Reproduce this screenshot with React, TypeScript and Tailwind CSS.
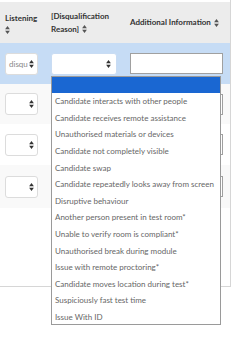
import React from 'react';

const font = { fontFamily: 'Lato, "Noto Sans", sans-serif' };

function SortIcon({ className = '' }: { className?: string }) {
  return (
    <svg viewBox="0 0 6 10" className={`w-[5px] h-[8px] shrink-0 ${className}`} fill="currentColor">
      <path d="M3 0 L6 4 H0 Z M3 10 L0 6 H6 Z" />
    </svg>
  );
}

const reasons = [
  'Candidate interacts with other people',
  'Candidate receives remote assistance',
  'Unauthorised materials or devices',
  'Candidate not completely visible',
  'Candidate swap',
  'Candidate repeatedly looks away from screen',
  'Disruptive behaviour',
  'Another person present in test room*',
  'Unable to verify room is compliant*',
  'Unauthorised break during module',
  'Issue with remote proctoring*',
  'Candidate moves location during test*',
  'Suspiciously fast test time',
  'Issue With ID',
];

function SmallSelect({ value = '' }: { value?: string }) {
  return (
    <div className="w-[33px] h-[22px] bg-white border border-[#dcdcdc] rounded-[3px] flex items-center justify-between pl-[3px] pr-[3px] overflow-hidden">
      <span className="text-[8px] text-[#888] leading-none">{value}</span>
      <SortIcon className="text-[#333]" />
    </div>
  );
}

function Row({ bg, h, first }: { bg: string; h: string; first?: boolean }) {
  return (
    <div className={`grid grid-cols-[46px_79px_105px] items-center ${bg} ${h}`}>
      <div className="pl-[5px]">
        <SmallSelect value={first ? 'disqu' : ''} />
      </div>
      <div className="pl-[5px]">
        {first && (
          <div className="w-[66px] h-[22px] bg-white border border-[#c9dcf3] rounded-[3px] flex items-center justify-end pr-[5px]">
            <SortIcon className="text-[#333]" />
          </div>
        )}
      </div>
      <div className="pl-[5px]">
        <div className="w-[93px] h-[21px] bg-white border border-[#a0a0a0]" />
      </div>
    </div>
  );
}

export default function App() {
  return (
    <div className="w-[244px] h-[338px] bg-white relative overflow-hidden text-[#333]" style={font}>
      <div className="w-[231px] h-[287px] border-r border-b border-[#d6d6d6] pt-[2px]">
        {/* header */}
        <div className="grid grid-cols-[46px_79px_105px] items-center h-[41px] bg-[#ececec] text-[8px] font-bold leading-[13px] text-[#333]">
          <div className="pl-[5px]">
            <div>Listening</div>
            <SortIcon className="text-[#555] mt-[1px]" />
          </div>
          <div className="pl-[5px]">
            <div>[Disqualification</div>
            <div className="flex items-center gap-[3px]">
              Reason]
              <SortIcon className="text-[#555]" />
            </div>
          </div>
          <div className="pl-[5px] flex items-center gap-[3px]">
            Additional Information
            <SortIcon className="text-[#555]" />
          </div>
        </div>
        <Row bg="bg-[#c6dcf5]" h="h-[41px]" first />
        <Row bg="bg-[#f9f9f9]" h="h-[40px]" />
        <Row bg="bg-white" h="h-[41px]" />
        <Row bg="bg-[#f9f9f9]" h="h-[43px]" />
      </div>

      {/* open select list */}
      <div className="absolute left-[51px] top-[76px] w-[170px] h-[249px] bg-white border border-[#9a9a9a] flex flex-col">
        <div className="h-[16px] bg-[#1a67d2] shrink-0" />
        {reasons.map((r) => (
          <div key={r} className="h-[16.6px] shrink-0 flex items-center pl-[3px] text-[8px] text-[#666] whitespace-nowrap leading-none">
            {r}
          </div>
        ))}
      </div>
    </div>
  );
}
